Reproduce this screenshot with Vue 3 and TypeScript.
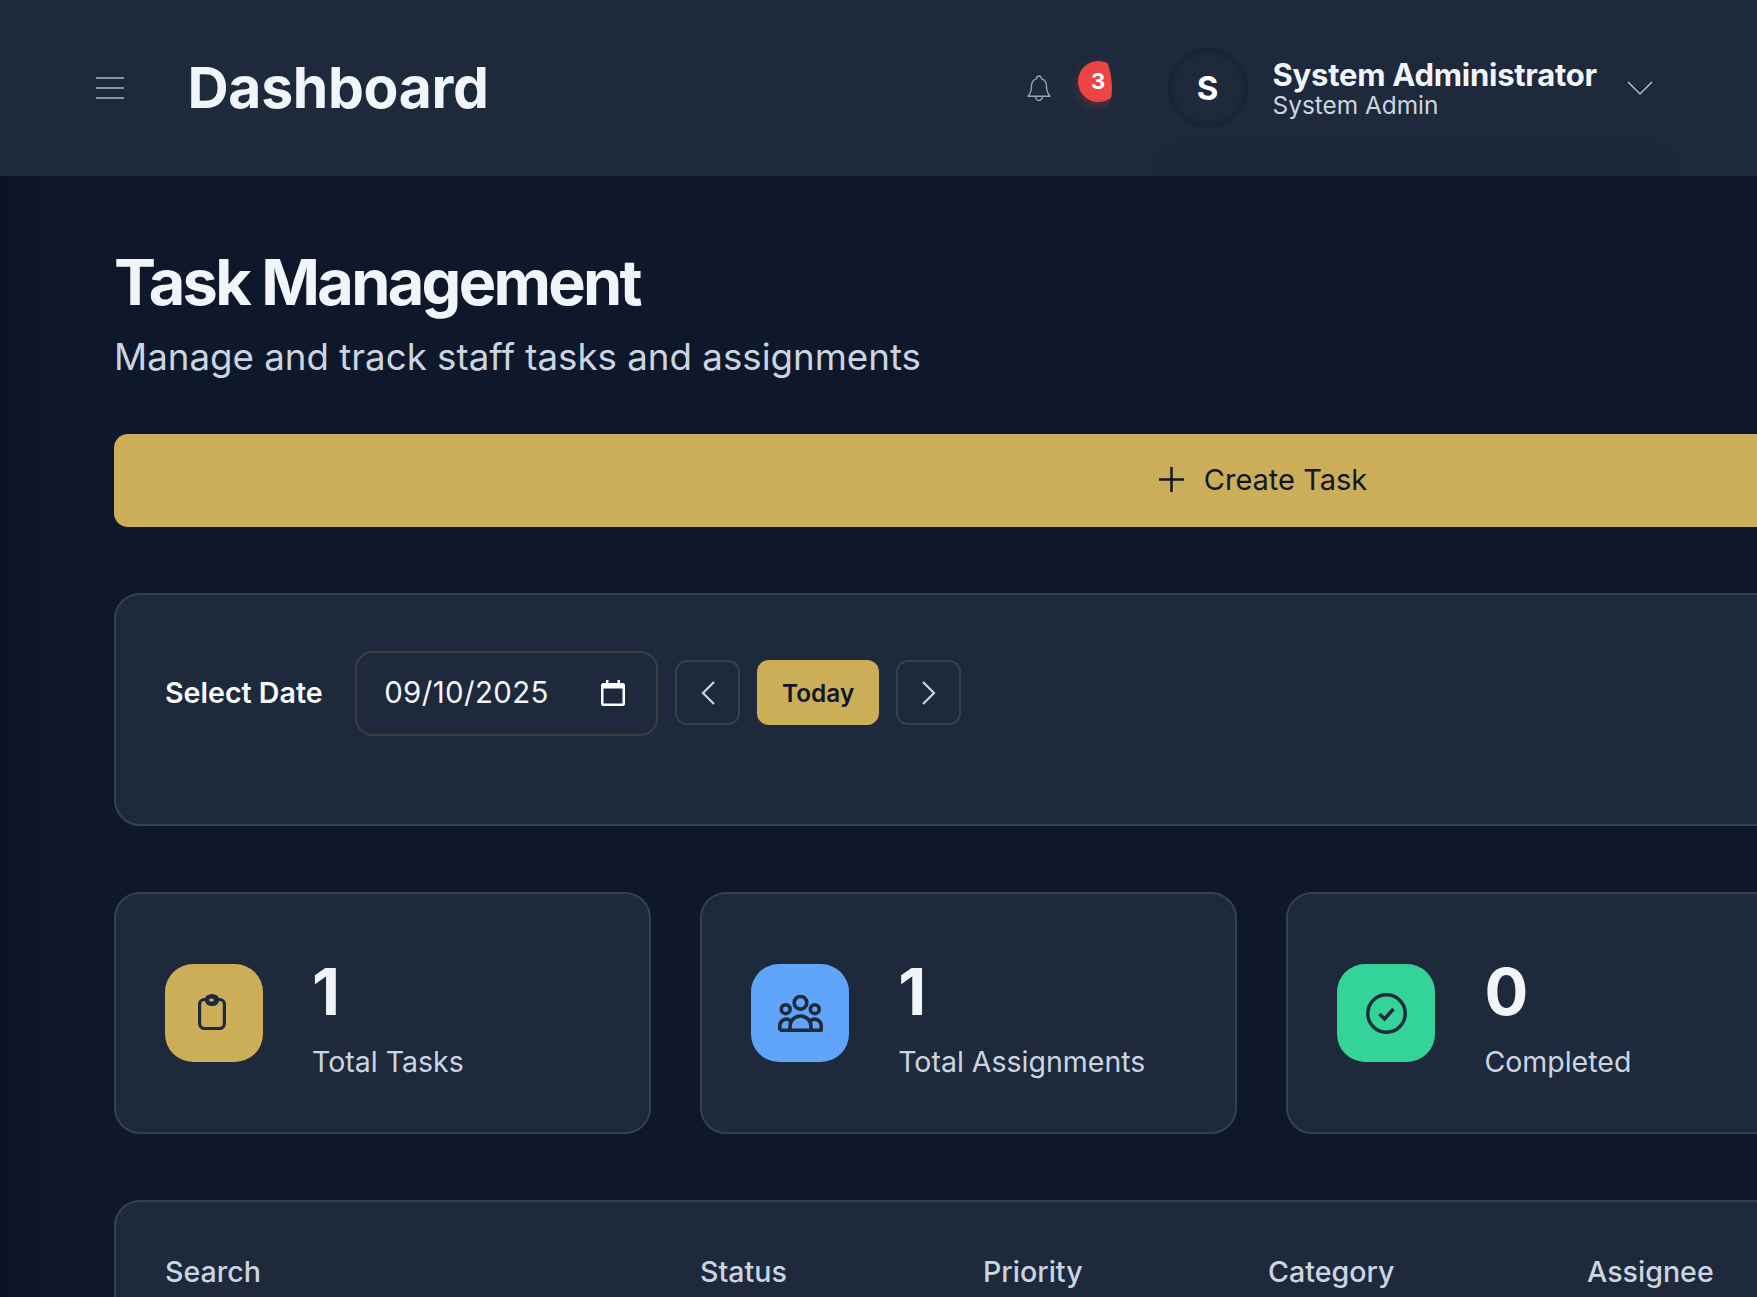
<script setup lang="ts">
const stats = [
  { value: '1', label: 'Total Tasks', tone: 'gold', icon: 'clipboard' },
  { value: '1', label: 'Total Assignments', tone: 'blue', icon: 'people' },
  { value: '0', label: 'Completed', tone: 'green', icon: 'check' },
]
const filters = ['Search', 'Status', 'Priority', 'Category', 'Assignee']
</script>

<template>
  <div class="page">
    <header class="topbar">
      <svg class="menu-icon" width="28" height="22" viewBox="0 0 28 22" fill="none">
        <path d="M0 1h28M0 11h28M0 21h28" stroke="#a9b5c6" stroke-width="1.3" />
      </svg>
      <h1 class="topbar-title">Dashboard</h1>

      <div class="bell">
        <svg width="24" height="27" viewBox="0 0 24 27" fill="none" stroke="#94a3b8" stroke-width="1.4">
          <path d="M12 1c-1.5 0-2.4 1-2.4 2.6C6.5 4.800 4.500 7.500 4.500 11c0 5-1 7.500-3.500 10.200h22C20.500 18.500 19.500 16 19.500 11c0-3.500-2-6.200-5.100-7.400C14.400 2 13.500 1 12 1z" stroke-linejoin="round" />
          <path d="M8.500 21.500a3.500 4 0 0 0 7 0" />
        </svg>
        <span class="badge">3</span>
      </div>

      <div class="user">
        <div class="avatar">S</div>
        <div class="user-text">
          <div class="user-name">System Administrator</div>
          <div class="user-role">System Admin</div>
        </div>
        <svg width="26" height="14" viewBox="0 0 26 14" fill="none" stroke="#cbd5e1" stroke-width="1.2">
          <path d="M1 1l12 12L25 1" />
        </svg>
      </div>
    </header>

    <main class="content">
      <h2 class="title">Task Management</h2>
      <p class="subtitle">Manage and track staff tasks and assignments</p>

      <button class="create-btn">
        <svg width="25" height="25" viewBox="0 0 25 25" fill="none" stroke="#0f172a" stroke-width="2.5">
          <path d="M12.500 0v25M0 12.500h25" />
        </svg>
        Create Task
      </button>

      <section class="panel date-panel">
        <label class="date-label">Select Date</label>
        <div class="date-input">
          <span>09/10/2025</span>
          <svg width="24" height="26" viewBox="0 0 24 26">
            <path d="M5 0h2.500v3h9V0H19v3h2.500A2.500 2.500 0 0 1 24 5.500v18a2.500 2.500 0 0 1-2.500 2.500h-19A2.500 2.500 0 0 1 0 23.500v-18A2.500 2.500 0 0 1 2.500 3H5zM2.500 8.500v15h19v-15z" fill="#fff" />
          </svg>
        </div>
        <button class="nav-btn" aria-label="Previous day">
          <svg width="14" height="24" viewBox="0 0 14 24" fill="none" stroke="#cbd5e1" stroke-width="2.2">
            <path d="M13 1L2 12l11 11" />
          </svg>
        </button>
        <button class="today-btn">Today</button>
        <button class="nav-btn" aria-label="Next day">
          <svg width="14" height="24" viewBox="0 0 14 24" fill="none" stroke="#cbd5e1" stroke-width="2.2">
            <path d="M1 1l11 11L1 23" />
          </svg>
        </button>
      </section>

      <section class="stats">
        <div v-for="s in stats" :key="s.label" class="panel stat-card">
          <div class="stat-icon" :class="s.tone">
            <svg v-if="s.icon === 'clipboard'" class="clip" width="28" height="36" viewBox="0 0 28 36" fill="none" stroke="#1e293b" stroke-width="3.200">
              <rect x="1.600" y="5.500" width="24.800" height="29" rx="5" />
              <ellipse cx="14" cy="6" rx="5.800" ry="4.400" fill="#1e293b" />
              <ellipse cx="13.500" cy="6" rx="2.400" ry="1.600" fill="#ccae58" stroke="none" />
            </svg>
            <svg v-else-if="s.icon === 'people'" width="45" height="37" viewBox="0 0 45 37" fill="none" stroke="#1e293b" stroke-width="3.600">
              <circle cx="22.500" cy="7.800" r="6.300" />
              <circle cx="7.700" cy="14.200" r="4.400" />
              <circle cx="36.800" cy="14.200" r="4.400" />
              <path d="M1.800 35.200h41.400V30.500a6.500 6.500 0 0 0-10.400-5M1.800 35.200V30.500a6.500 6.500 0 0 1 10.400-5M12 35v-3.500a10.500 10.500 0 0 1 21 0V35" stroke-linejoin="round" />
            </svg>
            <svg v-else width="41" height="41" viewBox="0 0 41 41" fill="none" stroke="#1e293b">
              <circle cx="20.500" cy="20.500" r="18.700" stroke-width="3.400" />
              <path d="M13.500 21l5 5 9-10" stroke-width="3.400" />
            </svg>
          </div>
          <div class="stat-text">
            <div class="stat-value">{{ s.value }}</div>
            <div class="stat-label">{{ s.label }}</div>
          </div>
        </div>
      </section>

      <section class="panel filters">
        <div v-for="f in filters" :key="f" class="filter-label">{{ f }}</div>
      </section>
    </main>
  </div>
</template>

<style>
html,
body {
  margin: 0;
  background: #0f172a;
  overflow: hidden;
}
</style>

<style scoped>
.page {
  width: 1757px;
  height: 1297px;
  overflow: hidden;
  font-family: Inter, 'Liberation Sans', sans-serif;
  color: #f1f5f9;
  background: #0f172a;
}

.topbar {
  display: flex;
  align-items: center;
  height: 176px;
  padding: 0 78px 0 96px;
  box-sizing: border-box;
  background: #1e293b;
  overflow: hidden;
}
.menu-icon {
  margin-right: 63.5px;
}
.topbar-title {
  margin: -2px 0 0;
  font-size: 57px;
  font-weight: 700;
  line-height: 1;
  letter-spacing: -0.3px;
}

.bell {
  position: relative;
  display: flex;
  align-items: center;
  justify-content: center;
  width: 146px;
  height: 146px;
  margin-left: auto;
  margin-right: 40px;
  border-radius: 50%;
  overflow: hidden;
}
.badge {
  position: absolute;
  left: 112px;
  top: 46px;
  width: 41px;
  height: 41px;
  border-radius: 50%;
  background: #ef4444;
  box-shadow: 0 4px 12px rgba(239, 68, 68, 0.3);
  color: #fff;
  font-size: 22px;
  font-weight: 700;
  line-height: 41px;
  text-align: center;
}

.user {
  position: relative;
  display: flex;
  align-items: center;
  padding: 0 26px 0 17px;
}
.user::after {
  content: '';
  position: absolute;
  left: 8px;
  right: 8px;
  top: calc(100% + 22px);
  height: 60px;
  border-radius: 20px;
  background: rgba(15, 23, 42, 0.09);
  filter: blur(6px);
}
.avatar {
  display: flex;
  align-items: center;
  justify-content: center;
  width: 78px;
  height: 78px;
  border-radius: 50%;
  background: #1e293b;
  box-shadow: inset 0 0 7px rgba(15, 23, 42, 0.6), 0 0 3px rgba(15, 23, 42, 0.3);
  color: #fff;
  font-size: 33px;
  font-weight: 700;
  margin-right: 26px;
}
.user-text {
  margin-right: 30px;
  padding-top: 3px;
}
.user-name {
  font-size: 31px;
  font-weight: 700;
  line-height: 32px;
  letter-spacing: -0.25px;
}
.user-role {
  font-size: 24.4px;
  line-height: 29px;
  color: #cbd5e1;
}

.content {
  width: 2298px;
  padding: 67.5px 0 0 114px;
  box-shadow: inset 50px 0 40px -32px rgba(2, 6, 23, 0.28);
}
.title {
  margin: 0;
  font-size: 63px;
  font-weight: 700;
  line-height: 76px;
  letter-spacing: -2.7px;
}
.subtitle {
  margin: 10.5px 0 0;
  font-size: 36.7px;
  line-height: 54px;
  color: #cbd5e1;
}

.create-btn {
  display: flex;
  align-items: center;
  justify-content: center;
  gap: 20px;
  width: 100%;
  height: 93px;
  margin-top: 50px;
  padding: 0 0 2px;
  border: 0;
  border-radius: 14px;
  background: #ccae58;
  color: #0f172a;
  font-family: inherit;
  font-size: 29px;
  font-weight: 400;
}

.panel {
  box-sizing: border-box;
  background: #1e293b;
  border: 2px solid #334155;
  border-radius: 26px;
}

.date-panel {
  display: flex;
  align-items: flex-start;
  height: 233px;
  margin-top: 66px;
  padding: 56px 49px 0;
}
.date-label {
  align-self: flex-start;
  margin: 20px 32.5px 0 0;
  font-size: 28.6px;
  font-weight: 600;
  line-height: 44px;
  color: #f8fafc;
}
.date-input {
  display: flex;
  align-items: center;
  justify-content: space-between;
  box-sizing: border-box;
  width: 303px;
  height: 85px;
  padding: 0 31px 2px 27px;
  border: 2px solid rgba(201, 173, 87, 0.17);
  border-radius: 18px;
  font-size: 29.4px;
  letter-spacing: 0.4px;
}
.nav-btn,
.today-btn {
  display: flex;
  align-items: center;
  justify-content: center;
  box-sizing: border-box;
  height: 65px;
  margin: 9px 0 0 17px;
  border-radius: 12px;
}
.nav-btn {
  width: 65px;
  background: transparent;
  border: 2px solid #334155;
}
.today-btn {
  width: 122px;
  border: 0;
  background: #ccae58;
  color: #0f172a;
  font-family: inherit;
  font-size: 24.4px;
  font-weight: 600;
}

.stats {
  display: grid;
  grid-template-columns: repeat(4, 536.6px);
  gap: 49.6px;
  margin-top: 66px;
}
.stat-card {
  display: flex;
  align-items: center;
  gap: 49px;
  height: 242px;
  padding: 0 49px;
}
.stat-icon {
  display: flex;
  align-items: center;
  justify-content: center;
  flex: none;
  width: 98px;
  height: 98px;
  border-radius: 28px;
}
.stat-icon.gold {
  background: #ccae58;
}
.stat-icon.blue {
  background: #60a5fa;
}
.stat-icon.green {
  background: #34d399;
}
.clip {
  margin: 0 5px 2px 0;
}
.stat-text {
  padding-top: 11px;
}
.stat-value {
  font-size: 65px;
  font-weight: 700;
  line-height: 78px;
}
.stat-label {
  margin-top: 9px;
  font-size: 28.5px;
  line-height: 44px;
  color: #cbd5e1;
}

.filters {
  display: grid;
  grid-template-columns: 535px 283px 285px 319px 1fr;
  margin-top: 66px;
  height: 300px;
  padding: 48px 49px 0;
}
.filter-label {
  font-size: 28.6px;
  font-weight: 500;
  line-height: 44px;
  color: #cbd5e1;
}
</style>
